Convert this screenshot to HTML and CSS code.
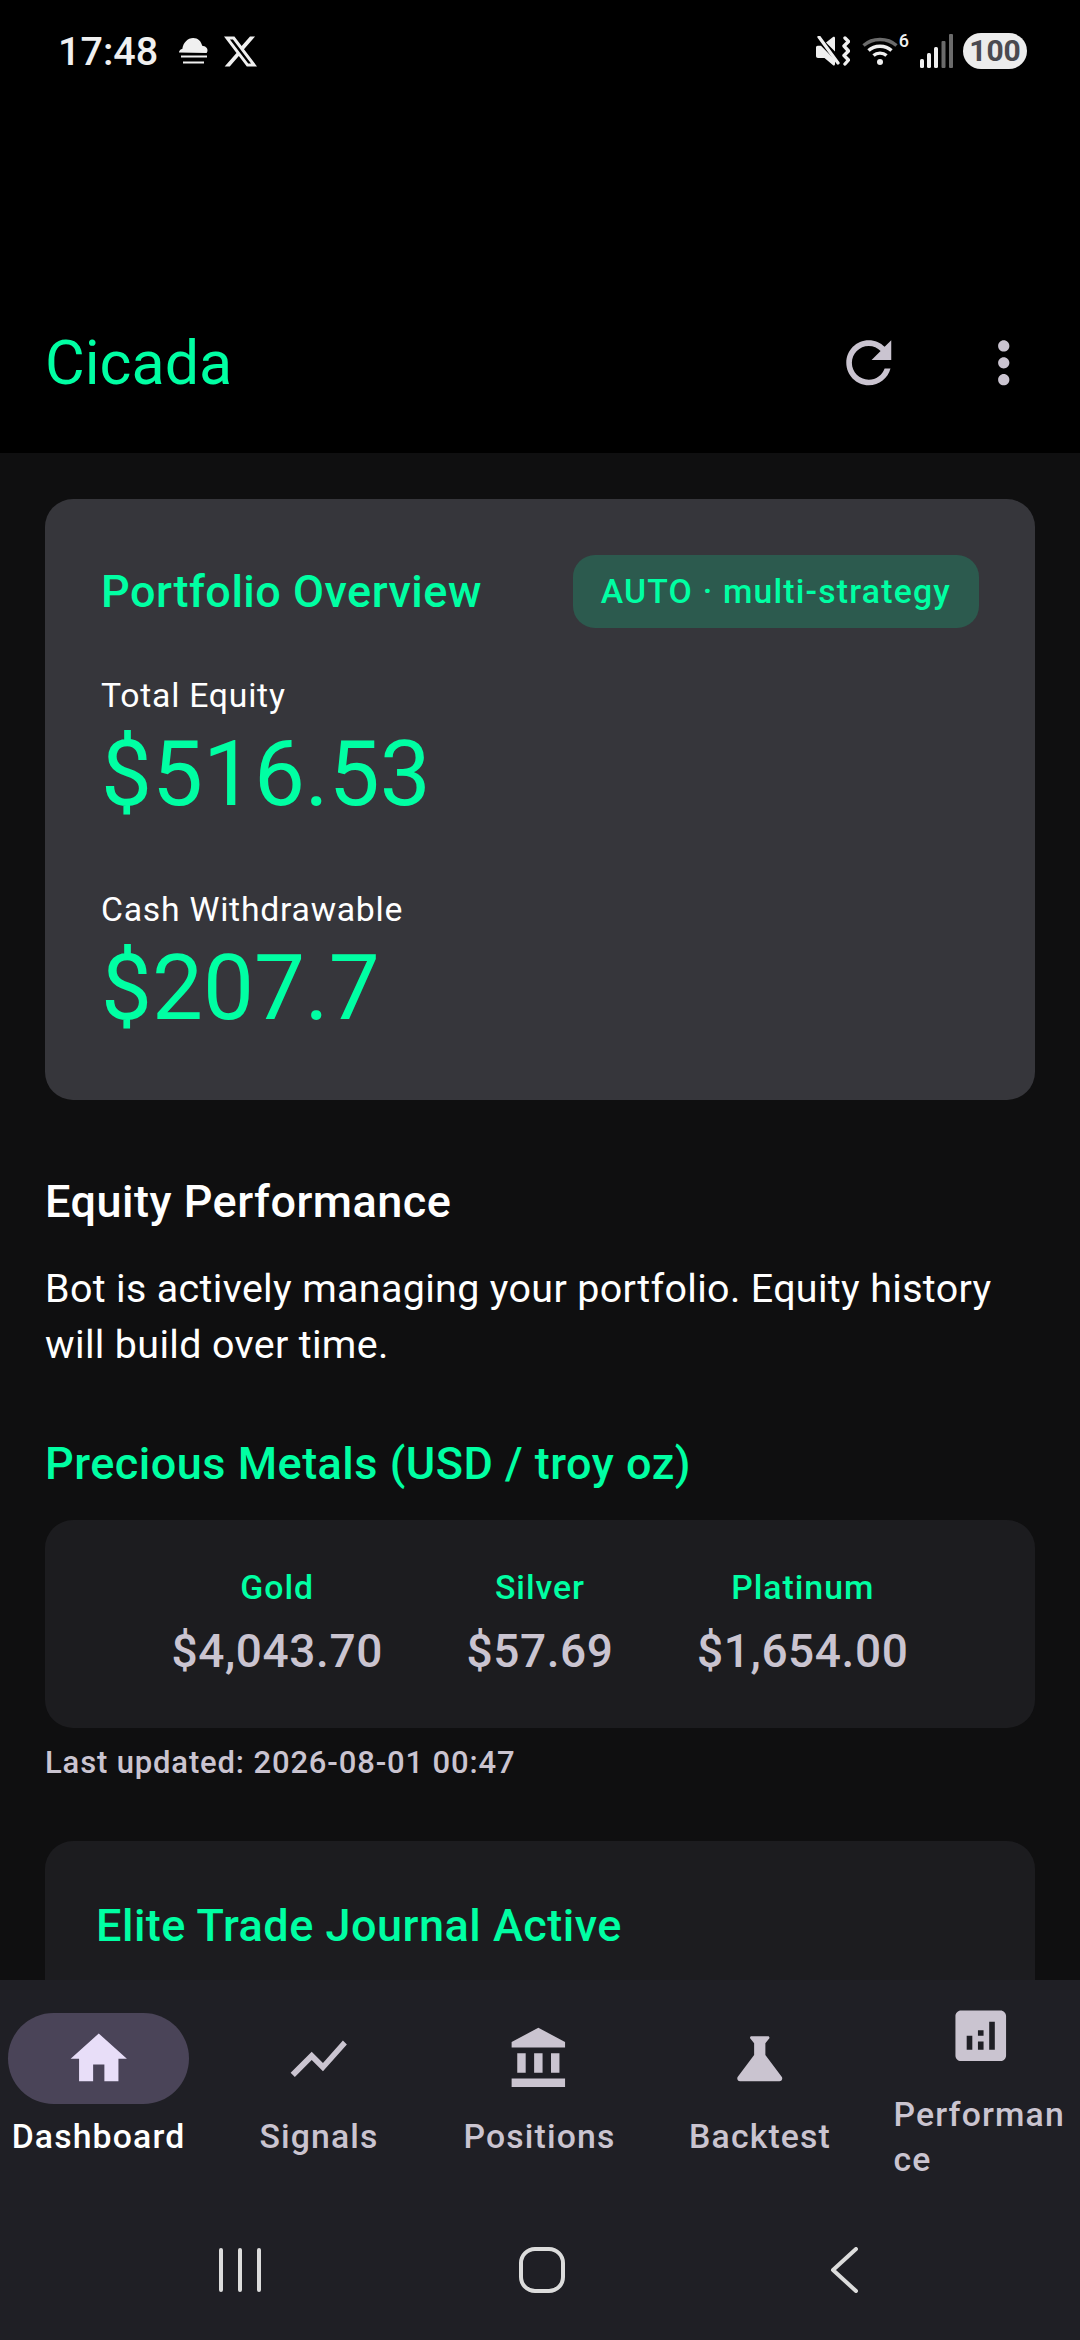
FILE: index.html
```html
<!DOCTYPE html>
<html lang="en">

<head>
    <meta charset="UTF-8">
    <meta name="viewport" content="width=device-width, initial-scale=1.0">
    <title>Cicada</title>
    <link rel="stylesheet" href="styles.css">
</head>

<body>
    <div class="screen">
        <header class="app-header">
            <div class="status-bar">
                <div class="status-left">
                    <span class="clock">17:48</span>
                    <svg class="ico-cloud" viewBox="0 0 30 26"><path fill="#f0f0f0" d="M1 14.5c0-2 1.4-3.4 3.3-3.6C5.2 4.8 9.6 0 15.2 0c4.8 0 8 3.2 9 7.800 2.9.2 5.300 2 5.300 4.500 0 1.200-.3 2-.9 2.700z"/><path stroke="#f0f0f0" stroke-width="2.2" d="M3 18.500h26M5 24.500h21"/></svg>
                    <svg class="ico-x" viewBox="0 0 24 24"><path fill="#f0f0f0" d="M18.901 1.153h3.68l-8.04 9.19L24 22.846h-7.406l-5.8-7.584-6.638 7.584H.474l8.6-9.83L0 1.154h7.594l5.243 6.932ZM17.61 20.644h2.039L6.486 3.24H4.298Z"/></svg>
                </div>
                <div class="status-right">
                    <svg class="ico-mute" viewBox="0 0 34 30"><path fill="#f0f0f0" d="M0 11.500c0-1 .7-1.700 1.700-1.700h3.300l14 14.300V28c0 1.400-1 2-2.200 1L8.500 22H2c-1.200 0-2-.8-2-2zM10 6.500l7-5.600c.9-.6 2-.2 2 1.100v13.500z"/><path stroke="#f0f0f0" stroke-width="3.2" stroke-linecap="round" d="M3 1l19 26"/><path fill="none" stroke="#f0f0f0" stroke-width="3.4" stroke-linecap="round" stroke-linejoin="round" d="M29 2l3.500 3.500-4.500 4.500 4.500 5-4.500 4.500 4.500 4.500-3.500 4"/></svg>
                    <span class="wifi">
                        <svg class="ico-wifi" viewBox="0 0 36 30"><path fill="none" stroke="#6b6b6b" stroke-width="3.4" d="M1.500 9.500C10.500 1.500 25.500 1.500 34.500 9.500"/><path fill="none" stroke="#f0f0f0" stroke-width="3.4" d="M6.500 14.500C12.500 8.800 23.500 8.800 29.500 14.500M11.500 19.500C15 16.300 21 16.300 24.500 19.500"/><circle cx="18" cy="26" r="3" fill="#f0f0f0"/></svg>
                        <span class="wifi-num">6</span>
                    </span>
                    <svg class="ico-signal" viewBox="0 0 33 34"><g fill="#f0f0f0"><rect x="0" y="25" width="4" height="9" rx="1.5"/><rect x="7" y="19" width="4" height="15" rx="1.5"/><rect x="14" y="13" width="4" height="21" rx="1.5"/></g><g fill="#6b6b6b"><rect x="21.5" y="7" width="4" height="27" rx="1"/><rect x="29" y="0" width="4" height="34" rx="1"/></g></svg>
                    <span class="battery">100</span>
                </div>
            </div>
            <div class="toolbar">
                <span class="app-title">Cicada</span>
                <div class="toolbar-actions">
                    <button class="icon-btn"><svg class="ico" viewBox="0 0 24 24"><path d="M17.65 6.35C16.2 4.9 14.21 4 12 4c-4.42 0-7.99 3.58-7.99 8s3.57 8 7.99 8c3.73 0 6.84-2.55 7.73-6h-2.08c-.82 2.33-3.04 4-5.65 4-3.31 0-6-2.69-6-6s2.69-6 6-6c1.66 0 3.14.69 4.22 1.78L13 11h7V4l-2.35 2.35z"/></svg></button>
                    <button class="icon-btn"><svg class="ico" viewBox="0 0 24 24"><path d="M12 8c1.1 0 2-.9 2-2s-.9-2-2-2-2 .9-2 2 .9 2 2 2zm0 2c-1.1 0-2 .9-2 2s.9 2 2 2 2-.9 2-2-.9-2-2-2zm0 6c-1.1 0-2 .9-2 2s.9 2 2 2 2-.9 2-2-.9-2-2-2z"/></svg></button>
                </div>
            </div>
        </header>

        <main class="content">
            <section class="overview-card">
                <div class="overview-head">
                    <h2 class="green-title">Portfolio Overview</h2>
                    <span class="mode-chip">AUTO · multi-strategy</span>
                </div>
                <div class="stat-label first">Total Equity</div>
                <div class="stat-value">$516.53</div>
                <div class="stat-label">Cash Withdrawable</div>
                <div class="stat-value">$207.7</div>
            </section>

            <h3 class="section-title">Equity Performance</h3>
            <p class="body-text">Bot is actively managing your portfolio. Equity history will build over time.</p>

            <h3 class="section-title green metals-title">Precious Metals (USD / troy oz)</h3>
            <section class="metals-card">
                <div class="metal">
                    <div class="metal-name">Gold</div>
                    <div class="metal-price">$4,043.70</div>
                </div>
                <div class="metal">
                    <div class="metal-name">Silver</div>
                    <div class="metal-price">$57.69</div>
                </div>
                <div class="metal">
                    <div class="metal-name">Platinum</div>
                    <div class="metal-price">$1,654.00</div>
                </div>
            </section>
            <div class="updated">Last updated: 2026-08-01 00:47</div>

            <section class="journal-card">
                <h2 class="green-title">Elite Trade Journal Active</h2>
            </section>
        </main>

        <nav class="bottom-nav">
            <div class="nav-item active">
                <div class="nav-pill"><svg class="ico" viewBox="0 0 24 24"><path d="M10 20v-6h4v6h5v-8h3L12 3 2 12h3v8z"/></svg></div>
                <span class="nav-label">Dashboard</span>
            </div>
            <div class="nav-item">
                <div class="nav-pill"><svg class="ico" viewBox="0 0 24 24"><path d="M3.5 18.49l6-6.01 4 4L22 6.92l-1.41-1.41-7.09 7.97-4-4L2 16.99z"/></svg></div>
                <span class="nav-label">Signals</span>
            </div>
            <div class="nav-item">
                <div class="nav-pill"><svg class="ico" viewBox="0 0 24 24"><path d="M4 10v7h3v-7H4zm6 0v7h3v-7h-3zM2 22h19v-3H2v3zm14-12v7h3v-7h-3zm-4.5-9L2 6v2h19V6l-9.5-5z"/></svg></div>
                <span class="nav-label">Positions</span>
            </div>
            <div class="nav-item">
                <div class="nav-pill"><svg class="ico" viewBox="0 0 24 24"><path d="M19.8 18.4 14 10.67V6.5l1.35-1.69c.26-.33.03-.81-.39-.81H9.04c-.42 0-.65.48-.39.81L10 6.5v4.17L4.2 18.4c-.49.66-.02 1.6.8 1.6h14c.82 0 1.29-.94.8-1.6z"/></svg></div>
                <span class="nav-label">Backtest</span>
            </div>
            <div class="nav-item">
                <div class="nav-pill"><svg class="ico" viewBox="0 0 24 24"><path d="M19 3H5c-1.1 0-2 .9-2 2v14c0 1.1.9 2 2 2h14c1.1 0 2-.9 2-2V5c0-1.1-.9-2-2-2zM9 17H7v-5h2v5zm4 0h-2v-3h2v3zm0-5h-2v-2h2v2zm4 5h-2V7h2v10z"/></svg></div>
                <span class="nav-label">Performance</span>
            </div>
        </nav>

        <div class="system-nav">
            <div class="sys-btn"><svg class="sys-recents" viewBox="0 0 42 44"><path d="M2 2v40M21 2v40M40 2v40"/></svg></div>
            <div class="sys-btn"><span class="sys-home"></span></div>
            <div class="sys-btn"><svg class="sys-back" viewBox="0 0 28 46"><path d="M26 2L3 23l23 21"/></svg></div>
        </div>
    </div>
</body>

</html>
```
FILE: styles.css
```css
* {
    box-sizing: border-box;
}

body {
    margin: 0;
    background-color: #000;
    font-family: Roboto, "Noto Sans", sans-serif;
}

h2, h3, p {
    margin: 0;
}

.screen {
    width: 1080px;
    height: 2340px;
    display: flex;
    flex-direction: column;
    overflow: hidden;
}

/* top area */
.app-header {
    flex: none;
    height: 453px;
    background-color: #000;
}

.status-bar {
    height: 102px;
    padding: 0 53px 0 58px;
    display: flex;
    justify-content: space-between;
    align-items: center;
    margin-bottom: 170px;
}

.status-left, .status-right {
    display: flex;
    align-items: center;
}

.clock {
    font-size: 39.5px;
    font-weight: 500;
    color: #f0f0f0;
}

.ico-cloud {
    width: 30px;
    height: 26px;
    margin-left: 20px;
}

.ico-x {
    width: 33px;
    height: 33px;
    margin-left: 16px;
}

.ico-mute {
    width: 34px;
    height: 30px;
}

.wifi {
    display: flex;
    width: 46px;
    margin-left: 12px;
    position: relative;
}

.ico-wifi {
    width: 36px;
    height: 30px;
}

.wifi-num {
    position: absolute;
    right: -1px;
    top: -6px;
    font-size: 18px;
    font-weight: 500;
    color: #f0f0f0;
}

.ico-signal {
    width: 33px;
    height: 34px;
    margin-left: 12px;
}

.battery {
    width: 64px;
    height: 36px;
    margin-left: 10px;
    border-radius: 18px;
    background-color: #ececec;
    color: #4a4a50;
    font-size: 30px;
    font-weight: 700;
    line-height: 36px;
    text-align: center;
}

.toolbar {
    height: 181px;
    padding: 0 9px 0 45px;
    display: flex;
    justify-content: space-between;
    align-items: center;
}

.app-title {
    font-size: 61px;
    color: #00ffa3;
}

.toolbar-actions {
    display: flex;
}

.icon-btn {
    width: 135px;
    height: 135px;
    padding: 0;
    border: none;
    background: none;
    display: flex;
    justify-content: center;
    align-items: center;
}

.ico {
    width: 67.5px;
    height: 67.5px;
    fill: #cac4d0;
}

/* scrolling content */
.content {
    flex: 1;
    min-height: 0;
    overflow: hidden;
    padding: 46px 45px 0;
    background-color: #0f0f10;
}

.overview-card {
    height: 601px;
    padding: 56px;
    border-radius: 28px;
    background-color: #36363b;
}

.overview-head {
    display: flex;
    justify-content: space-between;
    align-items: center;
    height: 73px;
}

.green-title {
    font-size: 45px;
    font-weight: 500;
    line-height: 67px;
    letter-spacing: 0.5px;
    color: #00ffa3;
}

.mode-chip {
    height: 73px;
    padding: 0 28px;
    border-radius: 22px;
    background-color: #2c5a4e;
    color: #00ffa3;
    font-size: 33.75px;
    font-weight: 500;
    line-height: 73px;
    letter-spacing: 1.2px;
}

.stat-label {
    margin-top: 56px;
    font-size: 33.75px;
    line-height: 45px;
    letter-spacing: 0.75px;
    color: #fff;
}

.stat-label.first {
    margin-top: 45px;
}

.stat-value {
    font-size: 90.7px;
    line-height: 113px;
    color: #00ffa3;
}

.section-title {
    margin-top: 68px;
    font-size: 45px;
    font-weight: 500;
    line-height: 67px;
    letter-spacing: 0.5px;
    color: #fff;
}

.section-title.green {
    color: #00ffa3;
}

.metals-title {
    margin-top: 57px;
}

.body-text {
    margin-top: 26px;
    font-size: 39.4px;
    line-height: 56px;
    letter-spacing: 0.35px;
    color: #fff;
}

.metals-card {
    margin-top: 23px;
    height: 208px;
    padding: 2px 43px 0;
    border-radius: 28px;
    background-color: #1c1c1f;
    display: flex;
    justify-content: space-evenly;
    align-items: center;
}

.metal {
    text-align: center;
}

.metal-name {
    font-size: 33.75px;
    font-weight: 500;
    line-height: 45px;
    letter-spacing: 1px;
    color: #00ffa3;
}

.metal-price {
    margin-top: 8px;
    font-size: 46px;
    font-weight: 500;
    line-height: 67px;
    letter-spacing: 0.6px;
    color: #cac4d0;
}

.updated {
    margin-top: 12px;
    font-size: 31px;
    font-weight: 500;
    line-height: 45px;
    letter-spacing: 0.85px;
    color: #cac4d0;
}

.journal-card {
    margin-top: 56px;
    height: 300px;
    padding: 51px;
    border-radius: 28px;
    background-color: #1c1c1f;
}

/* bottom navigation */
.bottom-nav {
    flex: none;
    height: 220px;
    padding: 10px 9px 18px 8px;
    background-color: #1f1f25;
    display: flex;
    justify-content: space-between;
    align-items: center;
}

.nav-item {
    width: 181px;
    display: flex;
    flex-direction: column;
    align-items: center;
}

.nav-pill {
    width: 181px;
    height: 91px;
    border-radius: 46px;
    display: flex;
    justify-content: center;
    align-items: center;
}

.nav-item.active .nav-pill {
    background-color: #4a4458;
}

.nav-item.active .ico {
    fill: #e8def8;
}

.nav-label {
    max-width: 174px;
    margin-top: 10px;
    font-size: 33.75px;
    font-weight: 500;
    line-height: 45px;
    letter-spacing: 1.15px;
    color: #cac4d0;
    word-break: break-all;
}

.nav-item.active .nav-label {
    color: #fff;
}

.system-nav {
    flex: none;
    height: 140px;
    padding-left: 4px;
    background-color: #1f1f25;
    display: flex;
    justify-content: center;
    align-items: center;
}

.sys-btn {
    width: 302px;
    display: flex;
    justify-content: center;
    align-items: center;
}

.sys-recents {
    width: 42px;
    height: 44px;
    fill: none;
    stroke: #dcdcdc;
    stroke-width: 4;
    stroke-linecap: round;
}

.sys-home {
    width: 46px;
    height: 46px;
    border: 4px solid #dcdcdc;
    border-radius: 16px;
}

.sys-back {
    width: 28px;
    height: 46px;
    fill: none;
    stroke: #dcdcdc;
    stroke-width: 4;
    stroke-linecap: round;
    stroke-linejoin: round;
}
```
